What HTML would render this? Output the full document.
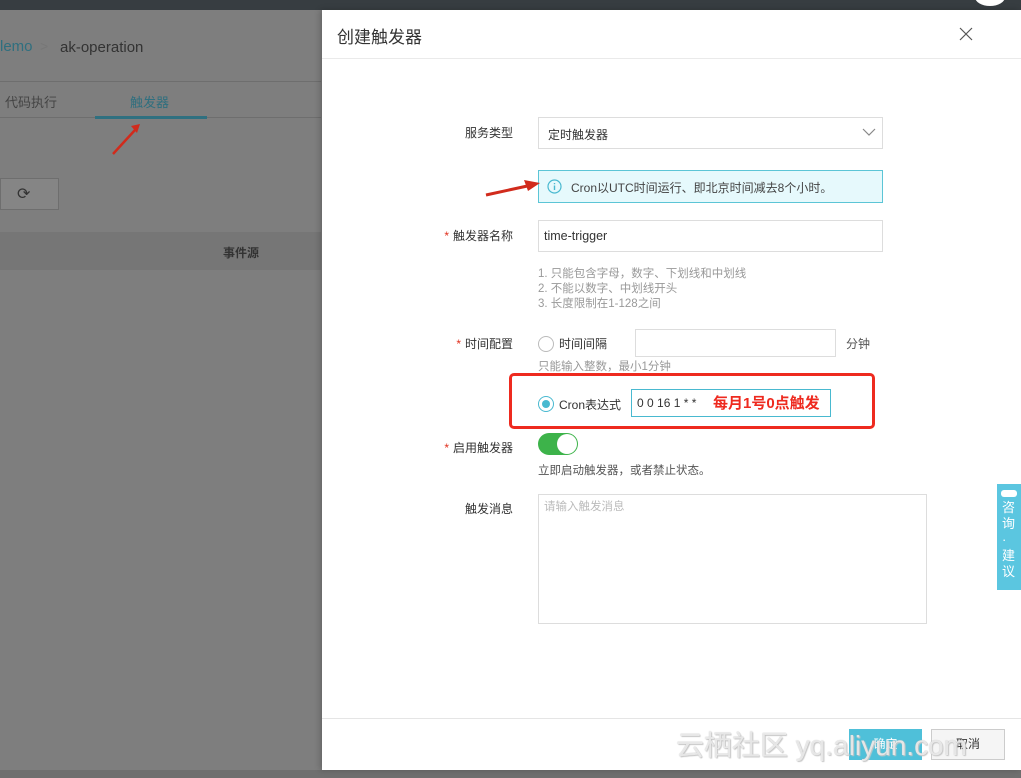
<!DOCTYPE html>
<html><head><meta charset="utf-8"><style>
*{margin:0;padding:0;box-sizing:border-box}
body{width:1021px;height:778px;position:relative;overflow:hidden;background:#7e7e7e;font-family:"Liberation Sans","Noto Sans CJK SC",sans-serif;font-size:12px;color:#333}
.a{position:absolute;white-space:nowrap}
.lbl{position:absolute;text-align:right;width:120px;left:393px;font-size:12px;color:#333}
.star{color:#e0301e;margin-right:4px}
.inp{position:absolute;border:1px solid #ddd;background:#fff}
.hint{position:absolute;color:#999;font-size:11.5px;line-height:15px}
</style></head><body>
<div class="a" style="left:0;top:0;width:1021px;height:10px;background:#373d41"></div>
<div class="a" style="left:975px;top:-12px;width:30px;height:18px;border-radius:50%;background:#fff"></div>
<div class="a" style="left:0;top:38px;font-size:15px;color:#2f6f7f">lemo</div>
<div class="a" style="left:40px;top:38px;font-size:14px;color:#777">&gt;</div>
<div class="a" style="left:60px;top:39px;font-size:15px;color:#333">ak-operation</div>
<div class="a" style="left:0;top:81px;width:321px;height:1px;background:#6e6e6e"></div>
<div class="a" style="left:5px;top:92px;font-size:13px;color:#444">代码执行</div>
<div class="a" style="left:130px;top:92px;font-size:13px;color:#2f6f7f">触发器</div>
<div class="a" style="left:0;top:117px;width:321px;height:1px;background:#6e6e6e"></div>
<div class="a" style="left:95px;top:116px;width:112px;height:3px;background:#2f7080"></div>
<svg class="a" style="left:108px;top:120px" width="36" height="40"><path d="M5 34L27 10" stroke="#d12b1c" stroke-width="2.5"/><path d="M23 6L32 4L29 13Z" fill="#d12b1c"/></svg>
<div class="a" style="left:0;top:178px;width:59px;height:32px;border:1px solid #6e6e6e;background:#858585"></div>
<div class="a" style="left:17px;top:184px;font-size:16px;color:#333">⟳</div>
<div class="a" style="left:0;top:232px;width:321px;height:38px;background:#767676"></div>
<div class="a" style="left:223px;top:244px;font-size:12px;font-weight:bold;color:#333">事件源</div>
<div class="a" style="left:0;top:770px;width:1021px;height:8px;background:#6f6f6f"></div>

<div class="a" style="left:322px;top:10px;width:699px;height:760px;background:#fff;box-shadow:-2px 0 6px rgba(0,0,0,.2)"></div>
<div class="a" style="left:337px;top:23px;font-size:17px;color:#333">创建触发器</div>
<svg class="a" style="left:959px;top:27px" width="14" height="14"><path d="M1 1L13 13M13 1L1 13" stroke="#555" stroke-width="1.2"/></svg>
<div class="a" style="left:322px;top:58px;width:699px;height:1px;background:#eaeaea"></div>

<div class="lbl" style="top:124px">服务类型</div>
<div class="inp" style="left:538px;top:117px;width:345px;height:32px"></div>
<div class="a" style="left:548px;top:126px;font-size:12px">定时触发器</div>
<svg class="a" style="left:862px;top:127px" width="14" height="10"><path d="M1 2L7 8L13 2" fill="none" stroke="#888" stroke-width="1.2"/></svg>

<div class="a" style="left:538px;top:170px;width:345px;height:33px;background:#e6f9fc;border:1px solid #5cc5d6"></div>
<svg class="a" style="left:547px;top:179px" width="15" height="15"><circle cx="7.5" cy="7.5" r="6.5" fill="none" stroke="#49b9d0" stroke-width="1.2"/><path d="M7.5 6.5v4.5M7.5 4v1.3" stroke="#49b9d0" stroke-width="1.4"/></svg>
<div class="a" style="left:571px;top:179px;font-size:12px;color:#444">Cron以UTC时间运行、即北京时间减去8个小时。</div>
<svg class="a" style="left:484px;top:178px" width="60" height="20"><path d="M2 17L48 7" stroke="#d12b1c" stroke-width="3"/><path d="M40 2L56 5L44 13Z" fill="#d12b1c"/></svg>

<div class="lbl" style="top:227px"><span class="star">*</span>触发器名称</div>
<div class="inp" style="left:538px;top:220px;width:345px;height:32px"></div>
<div class="a" style="left:544px;top:229px;font-size:12.5px">time-trigger</div>
<div class="hint" style="left:538px;top:267px">1. 只能包含字母，数字、下划线和中划线<br>2. 不能以数字、中划线开头<br>3. 长度限制在1-128之间</div>

<div class="lbl" style="top:335px"><span class="star">*</span>时间配置</div>
<div class="a" style="left:538px;top:336px;width:16px;height:16px;border:1px solid #bbb;border-radius:50%"></div>
<div class="a" style="left:559px;top:335px;font-size:12px">时间间隔</div>
<div class="inp" style="left:635px;top:329px;width:201px;height:28px"></div>
<div class="a" style="left:846px;top:335px;font-size:12px;color:#555">分钟</div>
<div class="hint" style="left:538px;top:360px">只能输入整数，最小1分钟</div>

<div class="a" style="left:509px;top:373px;width:366px;height:56px;border:3px solid #ee2a1f;border-radius:5px;background:#fff"></div>
<div class="a" style="left:538px;top:396px;width:16px;height:16px;border:1px solid #49b9d0;border-radius:50%"></div>
<div class="a" style="left:542px;top:400px;width:8px;height:8px;border-radius:50%;background:#49b9d0"></div>
<div class="a" style="left:559px;top:396px;font-size:12px">Cron表达式</div>
<div class="a" style="left:631px;top:389px;width:200px;height:28px;border:1px solid #49b9d0;background:#fff"></div>
<div class="a" style="left:637px;top:396px;font-size:12px">0 0 16 1 * *</div>
<div class="a" style="left:713px;top:392px;font-size:15px;font-weight:bold;color:#ee2a1f">每月1号0点触发</div>

<div class="lbl" style="top:439px"><span class="star">*</span>启用触发器</div>
<div class="a" style="left:538px;top:433px;width:40px;height:22px;border-radius:11px;background:#3db34a"></div>
<div class="a" style="left:557px;top:434px;width:20px;height:20px;border-radius:50%;background:#fff"></div>
<div class="a" style="left:538px;top:462px;font-size:11.5px;color:#555">立即启动触发器，或者禁止状态。</div>

<div class="lbl" style="top:500px">触发消息</div>
<div class="inp" style="left:538px;top:494px;width:389px;height:130px"></div>
<div class="a" style="left:544px;top:498px;font-size:11.5px;color:#bbb">请输入触发消息</div>

<div class="a" style="left:997px;top:484px;width:24px;height:106px;background:#5bc6e0"></div>
<div class="a" style="left:1001px;top:490px;width:16px;height:7px;border-radius:3px;background:#fff"></div>
<div class="a" style="left:1002px;top:500px;width:16px;font-size:13px;line-height:16px;color:#fff;white-space:normal">咨询·建议</div>

<div class="a" style="left:322px;top:718px;width:699px;height:1px;background:#e5e5e5"></div>
<div class="a" style="left:849px;top:729px;width:73px;height:31px;background:#4fc0d9;color:#fff;text-align:center;line-height:31px">确定</div>
<div class="a" style="left:931px;top:729px;width:74px;height:31px;background:#f5f5f5;border:1px solid #ccc;text-align:center;line-height:29px">取消</div>
<div class="a" style="left:676px;top:729px;font-size:28px;line-height:34px;color:rgba(255,255,255,.7);text-shadow:0 0 1px #aaa,1px 1px 1px #ccc">云栖社区 yq.aliyun.com</div>
</body></html>
